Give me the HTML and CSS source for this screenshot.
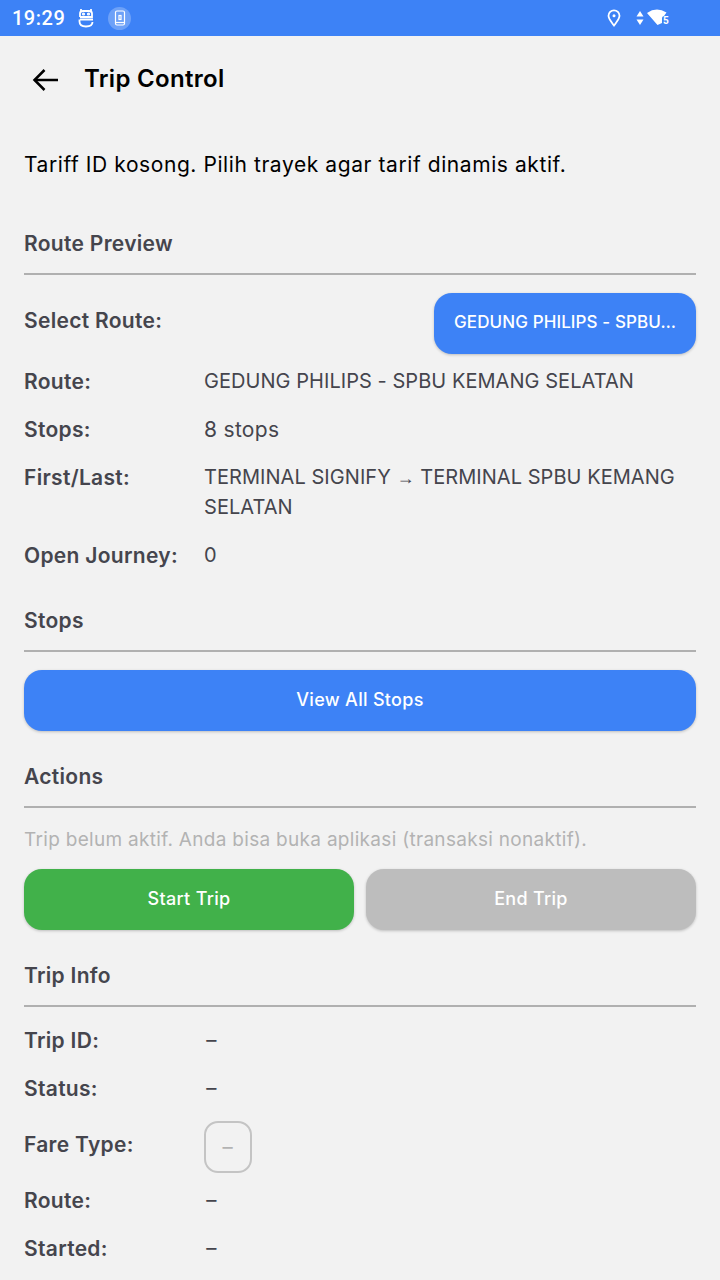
FILE: index.html
```html
<!DOCTYPE html>
<html lang="en">
<head>
  <meta charset="UTF-8" />
  <meta name="viewport" content="width=device-width, initial-scale=1.0"/>
  <title>Trip Control</title>
  <link rel="stylesheet" href="styles.css">
</head>
<body>
  <div class="status-bar">
    <span class="clock">19:29</span>
    <svg class="status-robot" width="16" height="20" viewBox="0 0 16 20" fill="none" stroke="#fff" stroke-width="1.800">
      <path d="M3 1V3M13 1V3"/>
      <path d="M2 9V5.500Q2 3 5 3H11Q14 3 14 5.500V9H2"/>
      <path d="M2 11.500H15M1.500 11.500V13.500Q1.500 18.500 8 18.500Q14.500 18.500 14.500 14"/>
      <circle cx="5.500" cy="6" r="0.700"/>
      <circle cx="10.500" cy="6" r="0.700"/>
    </svg>
    <span class="status-badge">
      <svg width="12" height="16" viewBox="0 0 12 16" fill="none" stroke="#fff" stroke-width="1.200">
        <rect x="1.500" y="1" width="9" height="14" rx="1.500"/>
        <path d="M1.500 12.500H10.500"/>
        <rect x="5" y="5.500" width="2" height="4"/>
      </svg>
    </span>
    <span class="status-spacer"></span>
    <svg class="status-pin" width="14" height="18" viewBox="0 0 14 18" fill="none" stroke="#fff" stroke-width="1.800">
      <path d="M7 16.500C4 12.500 1.500 10 1.500 6.800A5.500 5.500 0 0 1 12.500 6.800C12.500 10 10 12.500 7 16.500Z"/>
      <circle cx="7" cy="6.800" r="1.500" fill="#fff" stroke="none"/>
    </svg>
    <svg class="status-arrows" width="8" height="16" viewBox="0 0 8 16" fill="#fff">
      <path d="M4 1L7.500 6.500H0.500Z"/>
      <path d="M4 15L0.500 9.500H7.500Z"/>
    </svg>
    <span class="status-wifi">
      <svg width="24" height="18" viewBox="0 0 24 18" fill="#fff">
        <path d="M0 5Q9.500 -1.500 19.500 4.500L17 8Q15 8.500 15 10V15L10.500 17Z"/>
      </svg>
      <span class="wifi-num">5</span>
    </span>
  </div>

  <div class="page">
    <div class="top-bar">
      <svg class="back-icon" width="26" height="24" viewBox="0 0 26 24" fill="none" stroke="#000" stroke-width="2.500">
        <path d="M26 12H2.500"/>
        <path d="M12.500 2L2.500 12L12.500 22"/>
      </svg>
      <h1>Trip Control</h1>
    </div>

    <p class="notice">Tariff ID kosong. Pilih trayek agar tarif dinamis aktif.</p>

    <div class="section-title first">Route Preview</div>
    <div class="select-row">
      <span class="label">Select Route:</span>
      <button class="btn route-btn">GEDUNG PHILIPS - SPBU…</button>
    </div>
    <div class="info-row"><span class="label">Route:</span><span class="value">GEDUNG PHILIPS - SPBU KEMANG SELATAN</span></div>
    <div class="info-row"><span class="label">Stops:</span><span class="value lower">8 stops</span></div>
    <div class="info-row"><span class="label">First/Last:</span><span class="value">TERMINAL SIGNIFY <span class="arrow">→</span> TERMINAL SPBU KEMANG<br>SELATAN</span></div>
    <div class="info-row"><span class="label">Open Journey:</span><span class="value">0</span></div>

    <div class="section-title">Stops</div>
    <button class="btn wide-btn">View All Stops</button>

    <div class="section-title">Actions</div>
    <p class="hint">Trip belum aktif. Anda bisa buka aplikasi (transaksi nonaktif).</p>
    <div class="action-row">
      <button class="btn start-btn">Start Trip</button>
      <button class="btn end-btn">End Trip</button>
    </div>

    <div class="section-title">Trip Info</div>
    <div class="info-row"><span class="label">Trip ID:</span><span class="value dash">-</span></div>
    <div class="info-row"><span class="label">Status:</span><span class="value dash">-</span></div>
    <div class="info-row fare-row"><span class="label">Fare Type:</span><span class="fare-chip"><span class="chip-dash">-</span></span></div>
    <div class="info-row"><span class="label">Route:</span><span class="value dash">-</span></div>
    <div class="info-row"><span class="label">Started:</span><span class="value dash">-</span></div>
  </div>
</body>
</html>
```

FILE: styles.css
```css
html, body {
  height: 1280px;
  overflow: hidden;
}

body {
  margin: 0;
  font-family: "Inter", "Noto Sans", sans-serif;
  background-color: #f2f2f2;
  color: #45454d;
}

.status-bar {
  height: 36px;
  background-color: #3d82f6;
  color: #fff;
  display: flex;
  align-items: center;
  padding: 0 0 0 12px;
}

.clock {
  font-family: "Roboto", sans-serif;
  font-size: 20px;
  font-weight: 500;
  letter-spacing: 0.5px;
  width: 66px;
}

.status-robot {
  margin-right: 14px;
}

.status-badge {
  width: 23px;
  height: 23px;
  border-radius: 50%;
  background-color: rgba(255, 255, 255, 0.25);
  display: flex;
  align-items: center;
  justify-content: center;
}

.status-spacer {
  flex: 1;
}

.status-pin {
  margin-right: 15px;
}

.status-arrows {
  margin-right: 3px;
}

.status-wifi {
  width: 73px;
  height: 20px;
  position: relative;
  display: block;
}

.wifi-num {
  position: absolute;
  left: 16px;
  top: 7px;
  font-family: "Roboto", sans-serif;
  font-size: 10px;
  font-weight: 700;
}

.page {
  padding: 0 24px;
}

.top-bar {
  display: flex;
  align-items: center;
  height: 88px;
  padding-left: 8px;
}

.back-icon {
  margin-top: 0;
  margin-right: 26px;
}

h1 {
  margin: 0;
  font-size: 24px;
  line-height: 28px;
  font-weight: 600;
  letter-spacing: 0.3px;
  color: #000;
  margin-top: -3px;
}

.notice {
  margin: 27px 0 0;
  font-size: 21px;
  line-height: 28px;
  letter-spacing: 0.58px;
  color: #000;
}

.section-title {
  font-size: 21px;
  font-weight: 600;
  letter-spacing: 0.3px;
  line-height: 30px;
  padding-bottom: 14px;
  border-bottom: 2px solid #b0b0b0;
  margin-top: 31px;
  margin-bottom: 18px;
}

.section-title.first {
  margin-top: 50px;
}

.info-row + .section-title {
  margin-top: 36px;
}

.label {
  width: 180px;
  flex-shrink: 0;
  font-size: 21px;
  font-weight: 600;
  letter-spacing: 0.3px;
}

.value {
  font-size: 20px;
  letter-spacing: 0.05px;
}

.value.lower {
  font-size: 21px;
  letter-spacing: 0.3px;
}

.value.dash {
  display: inline-block;
  transform: scaleX(1.6);
  transform-origin: left;
}

.arrow {
  font-family: "Liberation Sans", sans-serif;
  font-size: 18px;
}

.info-row {
  display: flex;
  line-height: 29px;
  padding-top: 1px;
  margin-bottom: 18px;
}

.select-row {
  display: flex;
  justify-content: space-between;
  align-items: center;
  margin-bottom: 12px;
}

.select-row .label {
  padding-bottom: 6px;
}

.btn {
  display: block;
  border: none;
  height: 61px;
  border-radius: 18px;
  color: #fff;
  font-family: inherit;
  font-size: 18px;
  font-weight: 500;
  letter-spacing: 0.3px;
  padding: 0 0 3px;
  box-shadow: 0 1px 3px rgba(0, 0, 0, 0.22);
}

.route-btn {
  width: 262px;
  font-size: 17px;
  letter-spacing: 0.1px;
  background-color: #3d82f6;
}

.wide-btn {
  width: 100%;
  background-color: #3d82f6;
}

.hint {
  margin: 0 0 16px;
  font-size: 19px;
  letter-spacing: 0.3px;
  line-height: 27px;
  color: #b3b3b3;
}

.action-row {
  display: flex;
  gap: 12px;
}

.action-row .btn {
  flex: 1;
}

.start-btn {
  background-color: #41b14a;
}

.end-btn {
  background-color: #bdbdbd;
}

.fare-row {
  align-items: center;
  margin-bottom: 12px;
  margin-top: -1px;
}

.fare-row .label {
  padding-bottom: 6px;
}

.fare-chip {
  width: 44px;
  height: 48px;
  border: 2px solid #c4c4c4;
  border-radius: 14px;
  display: flex;
  align-items: center;
  justify-content: center;
  color: #b3b3b3;
  font-size: 20px;
}

.chip-dash {
  display: inline-block;
  transform: scaleX(1.6);
}
```
